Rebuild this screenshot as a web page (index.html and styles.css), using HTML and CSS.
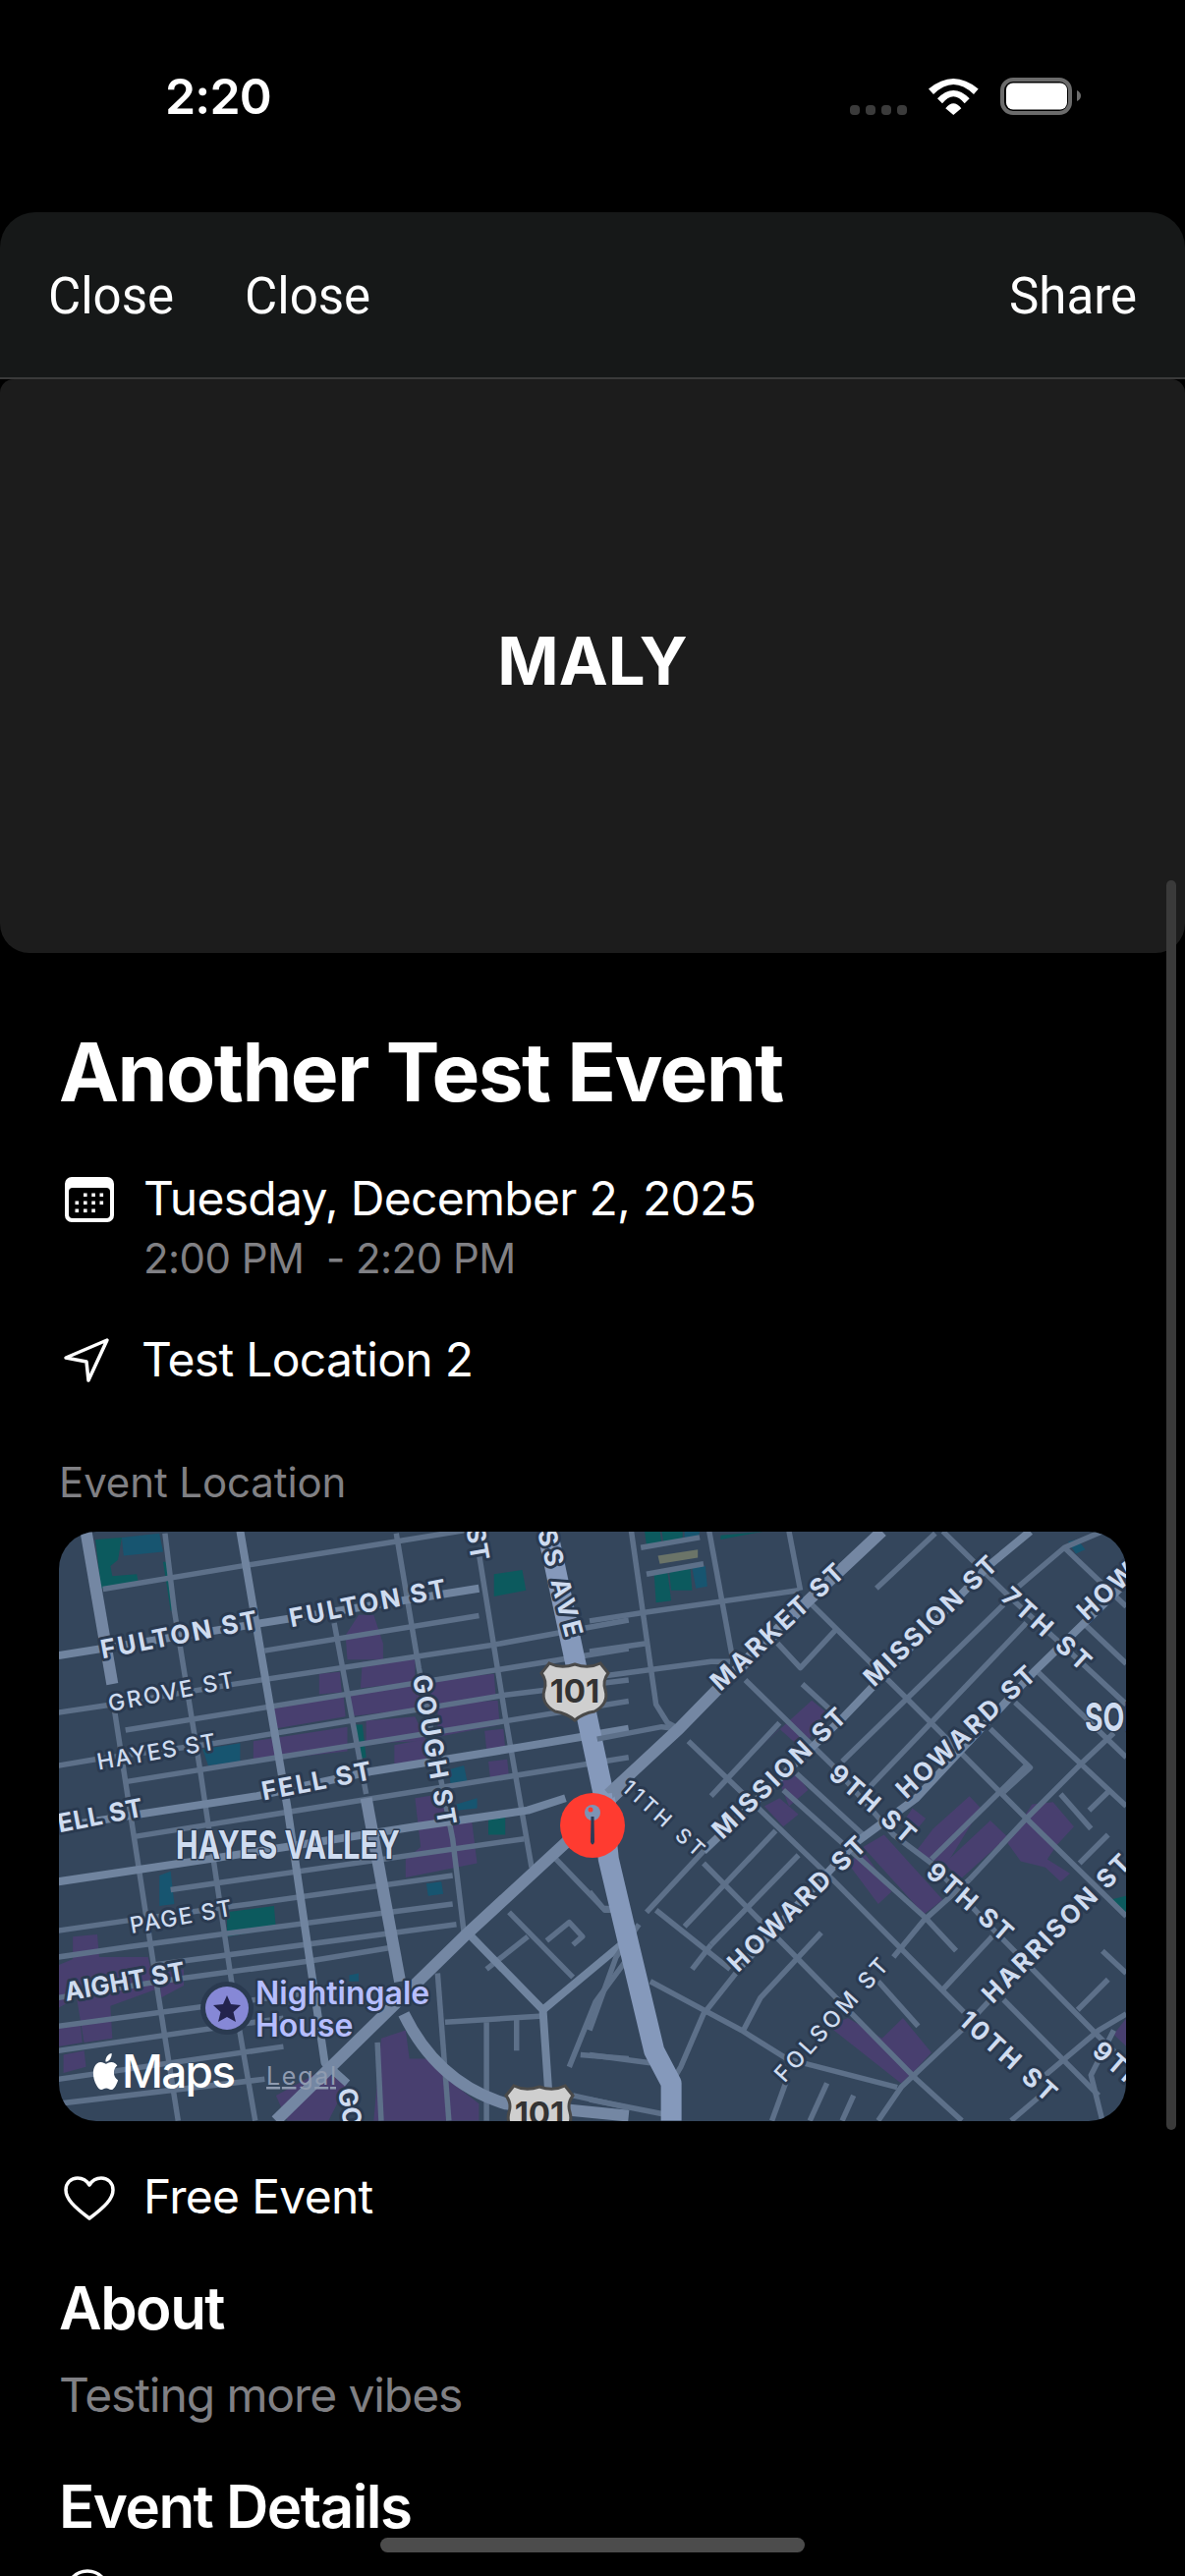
FILE: index.html
```html
<!DOCTYPE html>
<html lang="en">
<head>
    <meta charset="UTF-8">
    <meta name="viewport" content="width=device-width, initial-scale=1.0">
    <title>Another Test Event</title>
    <link rel="stylesheet" href="styles.css">
</head>
<body>
    <div class="status">
        <span class="time">2:20</span>
        <div class="status-icons">
            <div class="dots"><span></span><span></span><span></span><span></span></div>
            <svg class="wifi" viewBox="0 0 51 37" width="51" height="37">
                <path d="M0 10.5Q25.3-10.5 50.7 10.5L46 16Q25.3-4 5 16Z"/>
                <path d="M9 20.3Q25.3 3.7 41.7 20.3L36.7 25.3Q25.3 11.3 14 25.3Z"/>
                <path d="M17.3 30.3Q25.3 20.3 33.3 30.3L25.3 37Z"/>
            </svg>
            <svg class="battery" viewBox="0 0 82 38" width="82" height="38">
                <rect class="batt-case" x="2" y="2" width="69" height="34" rx="11"/>
                <rect class="batt-level" x="6" y="5.500" width="62" height="27" rx="7"/>
                <path class="batt-cap" d="M78 13Q82 15 82 18.500Q82 22 78 24Z"/>
            </svg>
        </div>
    </div>

    <nav class="topbar">
        <a href="#">Close</a>
        <a href="#">Close</a>
        <a href="#" class="share">Share</a>
    </nav>

    <div class="hero">MALY</div>

    <main class="content">
        <h1>Another Test Event</h1>

        <div class="row date-row">
            <svg class="icon" viewBox="0 0 50 46" width="50" height="46">
                <rect class="cal-body" width="50" height="46" rx="7"/>
                <rect class="cal-inner" x="4" y="11" width="42" height="31" rx="4"/>
                <g class="cal-dots">
                    <rect x="19" y="16.500" width="3.600" height="3.600"/>
                    <rect x="27.300" y="16.500" width="3.600" height="3.600"/>
                    <rect x="35.500" y="16.500" width="3.600" height="3.600"/>
                    <rect x="10.500" y="24.500" width="3.600" height="3.600"/>
                    <rect x="19" y="24.500" width="3.600" height="3.600"/>
                    <rect x="27.300" y="24.500" width="3.600" height="3.600"/>
                    <rect x="35.500" y="24.500" width="3.600" height="3.600"/>
                    <rect x="10.500" y="32.500" width="3.600" height="3.600"/>
                    <rect x="19" y="32.500" width="3.600" height="3.600"/>
                    <rect x="27.300" y="32.500" width="3.600" height="3.600"/>
                </g>
            </svg>
            <div>
                <p class="line">Tuesday, December 2, 2025</p>
                <p class="sub">2:00 PM&nbsp; - 2:20 PM</p>
            </div>
        </div>

        <div class="row loc-row">
            <svg class="icon icon-line" viewBox="0 0 48 46" width="48" height="46">
                <path d="M45 3L3 21L24 25L26 44Z"/>
            </svg>
            <p class="line">Test Location 2</p>
        </div>

        <p class="sub map-title">Event Location</p>

        <div class="map">
            <svg viewBox="0 0 1086 600" width="1086" height="600">
                <!-- left half, coords read off the left crop -->
                <g transform="translate(-20.300 -19) scale(.3827 .4146)">
                    <g class="purple">
                        <polygon points="815,300 850,250 890,250 915,320 915,360 820,360"/>
                        <polygon points="860,365 1000,360 1000,415 855,430"/>
                        <polygon points="745,395 800,390 805,440 745,445"/>
                        <polygon points="625,480 810,450 815,500 625,530"/>
                        <polygon points="825,440 1000,415 1005,480 825,500"/>
                        <polygon points="1000,415 1210,395 1215,455 1005,490"/>
                        <polygon points="870,510 1000,500 1030,560 870,565"/>
                        <polygon points="1060,470 1220,460 1225,520 1060,550"/>
                        <polygon points="570,560 820,525 820,585 570,610"/>
                        <polygon points="945,570 1030,555 1030,610 945,615"/>
                        <polygon points="1185,535 1235,530 1240,580 1190,580"/>
                        <polygon points="1195,610 1245,605 1250,650 1200,650"/>
                        <polygon points="1000,700 1070,690 1090,750 1150,750 1165,860 975,895 975,850 1015,820"/>
                        <polygon points="52,1110 90,1095 90,1040 155,1035 160,1090 290,1090 310,1170 190,1210 195,1290 120,1300 100,1190 52,1215"/>
                        <polygon points="52,1255 110,1255 115,1300 52,1310"/>
                        <polygon points="65,1330 120,1320 125,1360 65,1375"/>
                        <polygon points="320,1130 385,1120 385,1160 325,1190"/>
                        <polygon points="910,1290 975,1270 985,1340 1050,1340 1100,1400 1170,1450 1170,1492 890,1492"/>
                        <polygon points="630,1430 750,1370 820,1400 770,1492 660,1492"/>
                    </g>
                    <g class="teal">
                        <polygon points="150,65 220,60 210,115 190,130 195,155 260,150 265,175 165,185"/>
                        <polygon points="1210,150 1285,140 1295,190 1210,205"/>
                        <polygon points="330,120 345,120 365,240 350,240"/>
                        <polygon points="500,980 625,965 630,1020 500,1040"/>
                        <polygon points="835,520 860,520 870,600 850,605"/>
                        <polygon points="1195,750 1240,745 1240,790 1195,790"/>
                    </g>
                    <g class="teal-blue">
                        <polygon points="220,60 320,50 330,95 225,105"/>
                        <polygon points="320,890 350,880 360,960 320,965"/>
                        <polygon points="435,580 535,565 535,610 450,620"/>
                        <polygon points="1090,630 1130,620 1140,665 1095,670"/>
                        <polygon points="1110,715 1165,700 1165,725 1110,730"/>
                        <polygon points="1030,910 1070,905 1075,935 1035,940"/>
                        <polygon points="825,1135 850,1130 850,1150 825,1150"/>
                    </g>
                    <g class="rd-thin">
                        <polyline points="170,187 540,130 950,70 1150,40"/>
                        <polyline points="600,338 1170,252"/>
                        <polyline points="52,490 180,472 520,420 1200,325 1568,263"/>
                        <polyline points="230,533 1568,333"/>
                        <polyline points="52,620 150,605 470,565 1240,447 1568,410"/>
                        <polyline points="230,660 1568,462"/>
                        <polyline points="250,795 1568,600"/>
                        <polyline points="350,925 1290,800"/>
                        <polyline points="52,1025 240,1000 520,965 1100,890"/>
                        <polyline points="52,1090 240,1065 520,1030 1100,960"/>
                        <polyline points="300,1110 1110,1010"/>
                        <polyline points="52,1190 320,1150 720,1100 950,1065"/>
                        <polyline points="52,1260 450,1210 700,1180"/>
                        <polyline points="52,1320 650,1240"/>
                        <polyline points="52,1390 650,1310"/>
                        <polyline points="52,1450 600,1390"/>
                        <polyline points="335,50 360,240 430,640 520,1200 575,1492"/>
                        <polyline points="785,270 870,690"/>
                        <polyline points="950,50 1010,380 1100,800 1130,1030"/>
                        <polyline points="1170,100 1240,500 1310,870"/>
                        <polyline points="200,480 240,720 320,1200 370,1492"/>
                        <polyline points="1080,1250 1340,1235"/>
                        <polyline points="1190,1250 1190,1492"/>
                        <polyline points="1270,1240 1270,1320"/>
                        <polyline points="1060,1130 1090,1492"/>
                        <polyline points="900,1300 910,1492"/>
                        <polyline points="1190,1120 1300,1040"/>
                        <polyline points="1250,980 1420,1140"/>
                        <polyline points="1350,1050 1410,1005 1445,1040 1420,1060"/>
                        <polyline points="1375,850 1500,970 1568,975"/>
                        <polyline points="1410,1360 1480,1200 1568,1090"/>
                        <polyline points="1440,1330 1568,1340"/>
                        <polyline points="1420,1430 1568,1460"/>
                    </g>
                    <g class="rd-mid">
                        <polyline points="52,350 1170,185"/>
                        <polyline points="52,770 580,695 880,635 1280,575 1568,530"/>
                        <polyline points="52,905 450,850 1000,770 1300,730 1400,700"/>
                        <polyline points="535,45 660,720 760,1350 820,1400"/>
                        <polyline points="1150,1040 1340,1220 1360,1492"/>
                        <polyline points="1340,1220 1568,1045"/>
                    </g>
                    <g class="rd-wide">
                        <polyline points="125,45 195,420"/>
                        <polyline points="870,700 960,1150"/>
                        <polyline points="630,1492 1130,1040 1400,810 1568,660"/>
                        <path d="M970 1230Q1060 1400 1240 1450L1568 1480"/>
                    </g>
                    <polyline class="rd-fwy" points="1352,45 1508,720"/>
                </g>
                <!-- right half, coords read off the right crop -->
                <g transform="translate(540 -19) scale(.3866 .4146)">
                    <g class="purple">
                        <polygon points="455,570 585,460 625,490 560,580 500,530"/>
                        <polygon points="500,660 545,640 575,680 525,720"/>
                        <polygon points="460,720 500,700 550,740 510,770"/>
                        <polygon points="720,820 775,790 930,950 880,985"/>
                        <polygon points="680,860 720,830 795,930 760,960"/>
                        <polygon points="850,725 885,750 850,790 825,760"/>
                        <polygon points="860,830 905,775 1000,695 1030,725 935,870"/>
                        <polygon points="935,860 1055,755 1100,795 975,900"/>
                        <polygon points="1100,810 1165,715 1220,710 1275,770 1230,815 1205,850 1265,885 1240,905 1200,870 1135,855"/>
                        <polygon points="630,1260 680,1240 770,1290 825,1240 900,1325 850,1375 820,1400"/>
                        <polygon points="1380,1280 1413,1240 1413,1310"/>
                    </g>
                    <g class="teal">
                        <polygon points="170,150 205,145 215,215 175,220"/>
                        <polygon points="210,145 265,135 270,190 215,190"/>
                        <polygon points="145,45 185,45 190,75 150,80"/>
                        <polygon points="190,45 245,45 245,70 195,75"/>
                        <polygon points="345,55 460,45 345,65"/>
                        <polygon points="1370,950 1413,940 1413,985"/>
                    </g>
                    <g class="teal-blue">
                        <polygon points="270,135 305,130 310,180 280,185"/>
                        <polygon points="250,45 290,45 285,65 250,68"/>
                        <polygon points="1260,70 1285,65 1305,90 1280,100"/>
                    </g>
                    <polygon class="olive" points="180,105 285,90 285,110 185,125"/>
                    <g class="rd-thin">
                        <polyline points="110,45 175,470 205,515 235,530"/>
                        <polyline points="315,45 375,350"/>
                        <polyline points="525,45 555,190"/>
                        <polyline points="0,265 140,245 550,190"/>
                        <polyline points="0,340 150,320"/>
                        <polyline points="40,400 320,365 370,365"/>
                        <polyline points="20,555 190,525 235,530"/>
                        <polyline points="135,85 290,60"/>
                        <polyline points="150,150 300,125"/>
                        <polyline points="260,560 640,900 985,1225"/>
                        <polyline points="410,410 640,620 800,790 900,860 1060,1020 1340,1285 1413,1350"/>
                        <polyline points="580,220 840,460 1150,750 1413,990"/>
                        <polyline points="930,45 1110,210 1240,320 1413,470"/>
                        <polyline points="1250,85 1413,230"/>
                        <polyline points="1300,270 1413,370"/>
                        <polyline points="1120,465 1413,720"/>
                        <polyline points="1180,390 1413,600"/>
                        <polyline points="1055,530 1160,625 1090,685"/>
                        <polyline points="510,680 880,990 965,1075"/>
                        <polyline points="545,640 720,790"/>
                        <polyline points="300,860 480,1030 860,1390 980,1492"/>
                        <polyline points="175,975 370,1120"/>
                        <polyline points="160,1150 400,1270 520,1340 810,1410"/>
                        <polyline points="760,1150 865,1260"/>
                        <polyline points="1090,1195 1340,1430"/>
                        <polyline points="1350,1075 1413,1130"/>
                        <polyline points="150,980 300,830"/>
                        <polyline points="320,695 500,515"/>
                        <polyline points="665,610 1090,225"/>
                        <polyline points="730,680 1150,270"/>
                        <polyline points="900,850 1150,620"/>
                        <polyline points="1000,900 1150,750 1300,610 1380,540"/>
                        <polyline points="1290,860 1365,790"/>
                        <polyline points="800,1090 880,1000 1000,900"/>
                        <polyline points="250,1015 490,780"/>
                        <polyline points="320,1060 550,840"/>
                        <polyline points="270,1120 320,1060"/>
                        <polyline points="405,1270 450,1190 610,1030"/>
                        <polyline points="930,1170 1060,1040"/>
                        <polyline points="1285,1220 1365,1145"/>
                        <polyline points="1130,180 1250,85 1350,45"/>
                        <polyline points="755,185 910,50"/>
                        <polyline points="560,420 630,480"/>
                        <polyline points="495,320 555,380 650,285"/>
                        <polyline points="1315,730 1365,685"/>
                        <polyline points="1240,690 1320,775"/>
                        <polyline points="1200,1380 1340,1270 1413,1230"/>
                        <polyline points="760,1492 820,1410 990,1260 1060,1190"/>
                        <polyline points="1110,1492 1200,1420"/>
                        <polyline points="385,1130 300,1230 240,1360 215,1400"/>
                        <polyline points="0,1270 70,1090 130,1010"/>
                        <polyline points="0,930 40,975 60,975"/>
                        <polyline points="0,1330 160,1350"/>
                        <polyline points="0,1440 190,1475"/>
                        <polyline points="480,1492 520,1390"/>
                        <polyline points="580,1492 625,1400"/>
                        <polyline points="665,1492 695,1430"/>
                        <polyline points="1350,1492 1320,1380 1380,1270"/>
                    </g>
                    <g class="rd-mid">
                        <polyline points="390,1120 700,810 860,700 1170,390 1413,170"/>
                        <polyline points="300,830 670,500 1050,130 1160,45"/>
                    </g>
                    <polyline class="rd-wide" points="50,690 235,530 340,430 570,220 770,45"/>
                    <polyline class="rd-fwy" points="32,690 50,850 88,1000 170,1320 215,1400 215,1492"/>
                </g>

                <g class="lbl">
                    <text x="122" y="114" textLength="162" transform="rotate(-11 122 105)">FULTON ST</text>
                    <text x="314" y="82" textLength="162" transform="rotate(-11 314 73)">FULTON ST</text>
                    <text class="lbl-light" x="114" y="171" textLength="130" transform="rotate(-11 114 163)">GROVE ST</text>
                    <text class="lbl-light" x="99" y="232" textLength="122" transform="rotate(-10 99 224)">HAYES ST</text>
                    <text x="262" y="263" textLength="113" transform="rotate(-11 262 254)">FELL ST</text>
                    <text x="42" y="298" textLength="88" transform="rotate(-11 42 289)">ELL ST</text>
                    <text class="lbl-light" x="124" y="400" textLength="105" transform="rotate(-10 124 392)">PAGE ST</text>
                    <text x="67" y="467" textLength="124" transform="rotate(-10 67 458)">AIGHT ST</text>
                    <text x="382" y="231" textLength="155" transform="rotate(80 382 222)">GOUGH ST</text>
                    <text x="296" y="595" transform="rotate(80 296 586)">GO</text>
                    <text x="426" y="21" transform="rotate(80 426 12)">ST</text>
                    <text x="510" y="61" textLength="112" transform="rotate(75 510 52)">SS AVE</text>
                    <text class="lbl-light lbl-small" x="615" y="299" textLength="104" transform="rotate(42 615 292)">11TH ST</text>
                    <text x="733" y="255" textLength="178" transform="rotate(-44 733 246)">MISSION ST</text>
                    <text x="887" y="100" textLength="177" transform="rotate(-44 887 91)">MISSION ST</text>
                    <text x="731" y="106" textLength="175" transform="rotate(-43 731 97)">MARKET ST</text>
                    <text x="1005" y="108" textLength="112" transform="rotate(42 1005 99)">7TH ST</text>
                    <text class="lbl-start" x="1040" y="94" textLength="180" transform="rotate(-43 1040 85)">HOWARD ST</text>
                    <text x="923" y="213" textLength="183" transform="rotate(-43 923 204)">HOWARD ST</text>
                    <text x="751" y="388" textLength="184" transform="rotate(-44 751 379)">HOWARD ST</text>
                    <text x="828" y="286" textLength="107" transform="rotate(41 828 277)">9TH ST</text>
                    <text x="927" y="386" textLength="107" transform="rotate(41 927 377)">9TH ST</text>
                    <text x="1015" y="413" textLength="201" transform="rotate(-45 1015 404)">HARRISON ST</text>
                    <text class="lbl-light" x="786" y="505" textLength="160" transform="rotate(-48 786 497)">FOLSOM ST</text>
                    <text x="966" y="543" textLength="123" transform="rotate(42 966 534)">10TH ST</text>
                    <text class="lbl-start" x="1056" y="533" textLength="107" transform="rotate(41 1056 524)">9TH ST</text>
                    <text class="lbl-area" x="233" y="333" textLength="228" lengthAdjust="spacingAndGlyphs">HAYES VALLEY</text>
                    <text class="lbl-area lbl-start" x="1044" y="203" textLength="88" lengthAdjust="spacingAndGlyphs">SOMA</text>
                </g>

                <g transform="translate(525 163)">
                    <path class="shield" d="M-26-29Q-14-23 0-28Q14-23 26-29L34-19Q28-11 31-2Q35 12 20 20Q8 22 0 29Q-8 22-20 20Q-35 12-31-2Q-28-11-34-19Z"/>
                    <text class="shield-text" y="11">101</text>
                </g>
                <g transform="translate(489 593)">
                    <path class="shield" d="M-26-29Q-14-23 0-28Q14-23 26-29L34-19Q28-11 31-2Q35 12 20 20Q8 22 0 29Q-8 22-20 20Q-35 12-31-2Q-28-11-34-19Z"/>
                    <text class="shield-text" y="11">101</text>
                </g>

                <circle class="pin" cx="543" cy="299" r="33"/>
                <circle class="pin-head" cx="543" cy="286" r="8"/>
                <path class="pin-stem" d="M541.500 290L544.500 290L545 316Q543 321 541 316Z"/>
                <circle class="pin" cx="541" cy="283" r="2.500"/>

                <circle class="poi-ring" cx="171" cy="485" r="27"/>
                <circle class="poi" cx="171" cy="485" r="22"/>
                <polygon class="poi-star" points="171,472 175,481 185,482 177.500,489 180,499 171,494 162,499 164.500,489 157,482 167,481"/>
                <text class="poi-name" x="200" y="481">Nightingale</text>
                <text class="poi-name" x="200" y="514">House</text>

                <svg x="32" y="531" width="31" height="37" viewBox="0 0 24 24" preserveAspectRatio="none">
                    <path class="apple" d="M12.152 6.896c-.948 0-2.415-1.078-3.96-1.04-2.04.027-3.91 1.183-4.961 3.014-2.117 3.675-.546 9.103 1.519 12.09 1.013 1.454 2.208 3.09 3.792 3.039 1.52-.065 2.09-.987 3.935-.987 1.831 0 2.35.987 3.96.948 1.637-.026 2.676-1.48 3.676-2.948 1.156-1.688 1.636-3.325 1.662-3.415-.039-.013-3.182-1.221-3.22-4.857-.026-3.04 2.48-4.494 2.597-4.559-1.429-2.09-3.623-2.324-4.39-2.376-2-.156-3.675 1.09-4.61 1.09zM15.53 3.83c.843-1.012 1.4-2.427 1.245-3.83-1.207.052-2.662.805-3.532 1.818-.78.896-1.454 2.338-1.273 3.714 1.338.104 2.715-.688 3.559-1.701"/>
                </svg>
                <text class="maps-word" x="64" y="566" textLength="116">Maps</text>
                <text class="legal" x="211" y="563" textLength="71">Legal</text>
            </svg>
        </div>

        <div class="row free-row">
            <svg class="icon icon-line" viewBox="0 0 52 45" width="52" height="45">
                <path d="M26 43C10 31 2 23 2 14C2 7 7 2 14 2C19 2 23 4 26 9C29 4 33 2 38 2C45 2 50 7 50 14C50 23 42 31 26 43Z"/>
            </svg>
            <p class="line">Free Event</p>
        </div>

        <h2 class="about-title">About</h2>
        <p class="about-text">Testing more vibes</p>
        <h2 class="details-title">Event Details</h2>
        <svg class="icon icon-line details-icon" viewBox="0 0 46 46" width="46" height="46">
            <circle cx="23" cy="23" r="21"/>
        </svg>
    </main>

    <div class="scrollbar"></div>
    <div class="home-bar"></div>
</body>
</html>
```

FILE: styles.css
```css
* {
    box-sizing: border-box;
}
html, body {
    margin: 0;
    padding: 0;
}
body {
    position: relative;
    width: 1206px;
    height: 2622px;
    overflow: hidden;
    background-color: #000;
    color: #fff;
    font-family: Inter, "Liberation Sans", sans-serif;
}
p, h1, h2 {
    margin: 0;
}

/* status bar */
.status {
    display: flex;
    justify-content: space-between;
    height: 216px;
    padding: 0 106px 0 168px;
}
.time {
    margin-top: 70px;
    font: 600 50px/56px Inter, sans-serif;
    letter-spacing: -.8px;
}
.status-icons {
    display: flex;
    align-items: flex-end;
    gap: 22px;
    height: 38px;
    margin-top: 79px;
}
.dots {
    display: flex;
    gap: 6px;
}
.dots span {
    width: 10px;
    height: 10px;
    border-radius: 4px;
    background-color: #3b3b3b;
}
.wifi {
    fill: #fff;
}
.batt-case {
    fill: none;
    stroke: #6b6b6b;
    stroke-width: 4;
}
.batt-level {
    fill: #fff;
}
.batt-cap {
    fill: #6b6b6b;
}

/* top bar */
.topbar {
    display: flex;
    align-items: center;
    gap: 72px;
    height: 170px;
    padding: 4px 49px 0;
    background-color: #161818;
    border-bottom: 2px solid #3a3a3a;
    border-radius: 36px 36px 0 0;
}
.topbar a {
    color: #fff;
    text-decoration: none;
    font: 400 51px/60px Roboto, sans-serif;
}
.topbar .share {
    margin-left: auto;
}

.hero {
    display: flex;
    align-items: center;
    justify-content: center;
    height: 584px;
    padding-bottom: 12px;
    background-color: #1c1c1c;
    border-radius: 14px 14px 30px 30px;
    font-size: 67px;
    font-weight: 700;
}

/* content */
.content {
    padding: 0 60px;
}
h1 {
    margin-top: 72px;
    font-size: 82px;
    line-height: 100px;
    font-weight: 700;
    letter-spacing: -1.6px;
}
.row {
    display: flex;
}
.icon {
    flex: none;
}
.icon-line {
    fill: none;
    stroke: #fff;
    stroke-width: 3.5;
    stroke-linejoin: round;
}
.line {
    font-size: 48px;
    line-height: 56px;
    letter-spacing: -.7px;
}
.sub {
    margin-top: 8px;
    font-size: 42px;
    line-height: 50px;
    letter-spacing: -.55px;
    color: #808084;
}
.date-row {
    margin-top: 50px;
}
.date-row .icon {
    margin: 6px 30px 0 6px;
}
.cal-body {
    fill: #fff;
}
.cal-inner {
    fill: #000;
}
.cal-dots {
    fill: #fff;
}
.loc-row {
    margin-top: 50px;
}
.loc-row .icon {
    margin: 5px 32px 0 4px;
}
.map-title {
    margin-top: 72px;
    letter-spacing: -.1px;
}

/* map */
.map {
    width: 1086px;
    height: 600px;
    margin-top: 25px;
    overflow: hidden;
    border-radius: 38px;
    background-color: #34465c;
}
.map svg {
    display: block;
}
.map polyline, .map path {
    vector-effect: non-scaling-stroke;
}
.purple polygon {
    fill: #483f6f;
}
.teal polygon {
    fill: #0c5a5e;
}
.teal-blue polygon {
    fill: #175570;
}
.olive {
    fill: #6b7468;
}
.rd-thin, .rd-mid, .rd-wide, .rd-fwy {
    fill: none;
    stroke-linejoin: round;
}
.rd-thin {
    stroke: #5d7089;
    stroke-width: 5.500;
}
.rd-mid {
    stroke: #70849f;
    stroke-width: 8;
}
.rd-wide {
    stroke: #7487a3;
    stroke-width: 12;
}
.rd-fwy {
    stroke: #8599bb;
    stroke-width: 21;
}
.lbl text {
    fill: #cfdcf0;
    stroke: #2a3a50;
    stroke-width: 6px;
    stroke-linejoin: round;
    paint-order: stroke;
    font-family: Inter, sans-serif;
    font-size: 26px;
    font-weight: 700;
    text-anchor: middle;
}
.lbl .lbl-light {
    font-size: 23px;
    font-weight: 500;
}
.lbl .lbl-small {
    font-size: 21px;
}
.lbl .lbl-start {
    text-anchor: start;
}
.lbl .lbl-area {
    font-size: 40px;
    font-weight: 700;
    stroke-width: 3px;
}
.shield {
    fill: #cfcfcf;
    stroke: #4a4a4a;
    stroke-width: 3;
}
.shield-text {
    fill: #333;
    font-family: Inter, sans-serif;
    font-size: 33px;
    font-weight: 700;
    text-anchor: middle;
}
.pin {
    fill: #ff3b30;
}
.pin-head {
    fill: #7d93b4;
}
.pin-stem {
    fill: #2b3b56;
}
.poi-ring {
    fill: #2a3a50;
}
.poi {
    fill: #8688d6;
}
.poi-star {
    fill: #23234d;
}
.poi-name {
    fill: #b6beff;
    stroke: #2a3a50;
    stroke-width: 5px;
    stroke-linejoin: round;
    paint-order: stroke;
    font-size: 32px;
    font-weight: 600;
}
.apple {
    fill: #fff;
}
.maps-word {
    fill: #fff;
    font-size: 46px;
    font-weight: 500;
}
.legal {
    fill: #8f9bb0;
    font-size: 25px;
    text-decoration: underline;
}

.free-row {
    margin-top: 49px;
}
.free-row .icon {
    margin: 7px 29px 0 5px;
}
h2 {
    font-size: 60px;
    line-height: 70px;
    font-weight: 600;
    letter-spacing: -1.5px;
}
.about-title {
    margin-top: 50px;
}
.about-text {
    margin-top: 26px;
    font-size: 48px;
    line-height: 56px;
    letter-spacing: -1.1px;
    color: #808084;
}
.details-title {
    margin-top: 50px;
}
.details-icon {
    display: block;
    margin: 29px 0 0 6px;
}

/* overlays */
.scrollbar {
    position: absolute;
    top: 896px;
    left: 1187px;
    width: 10px;
    height: 1272px;
    border-radius: 5px;
    background-color: #3a3a3a;
}
.home-bar {
    position: absolute;
    top: 2583px;
    left: 387px;
    width: 432px;
    height: 15px;
    border-radius: 8px;
    background-color: #4c4c4c;
}
```
